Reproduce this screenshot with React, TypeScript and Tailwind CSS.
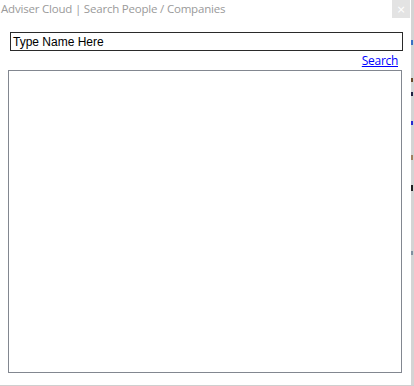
export default function App() {
  return (
    <div className="flex w-[414px] h-[386px] flex-col bg-white overflow-hidden">
      <div className="flex h-[385px]">
        {/* Dialog */}
        <div className="flex flex-col w-[411px] h-[385px] bg-white">
          <div className="flex h-[18px] items-start justify-between">
            <span className="pl-[1px] pt-[1px] text-[11.5px] leading-[16px] text-[#9a9a9a] font-['Open_Sans',sans-serif] tracking-[-0.2px]">
              Adviser Cloud | Search People / Companies
            </span>
            <button className="mr-[1px] flex h-[18px] w-[18px] items-center justify-center bg-[#e3e3e3] text-[11px] leading-none text-white font-['DejaVu_Sans',sans-serif]">
              ×
            </button>
          </div>

          <div className="mt-[14px] ml-[10px] flex h-[19px] w-[393px] items-center border border-[#2a2a2a] bg-white px-[2px]">
            <span className="text-[12px] leading-none text-black font-['Liberation_Sans',Arial,sans-serif]">
              Type Name Here
            </span>
          </div>

          <div className="mt-[2px] flex justify-end pr-[13px]">
            <a
              href="#"
              className="text-[12px] leading-[15px] text-[#0000ff] underline font-['Open_Sans',sans-serif] tracking-[-0.3px]"
            >
              Search
            </a>
          </div>

          <div className="mt-[2px] ml-[8px] h-[303px] w-[394px] border border-[#828790] bg-white" />
        </div>

        {/* background app peeking through */}
        <div className="flex w-[3px] flex-col bg-[#d4d4d4]">
          <div className="mt-[40px] h-[5px] w-[2px] bg-[#3a6fc4]" />
          <div className="mt-[33px] h-[4px] w-[2px] bg-[#6a4a2a]" />
          <div className="mt-[10px] h-[4px] w-[2px] bg-[#222244]" />
          <div className="mt-[25px] h-[4px] w-[2px] bg-[#2a2ad0]" />
          <div className="mt-[30px] h-[5px] w-[2px] bg-[#a08060]" />
          <div className="mt-[25px] h-[6px] w-[2px] bg-[#222222]" />
          <div className="mt-[60px] h-[4px] w-[2px] bg-[#8090a0]" />
        </div>
      </div>
      <div className="h-[1px] w-full bg-[#cfcfcf]" />
    </div>
  );
}
